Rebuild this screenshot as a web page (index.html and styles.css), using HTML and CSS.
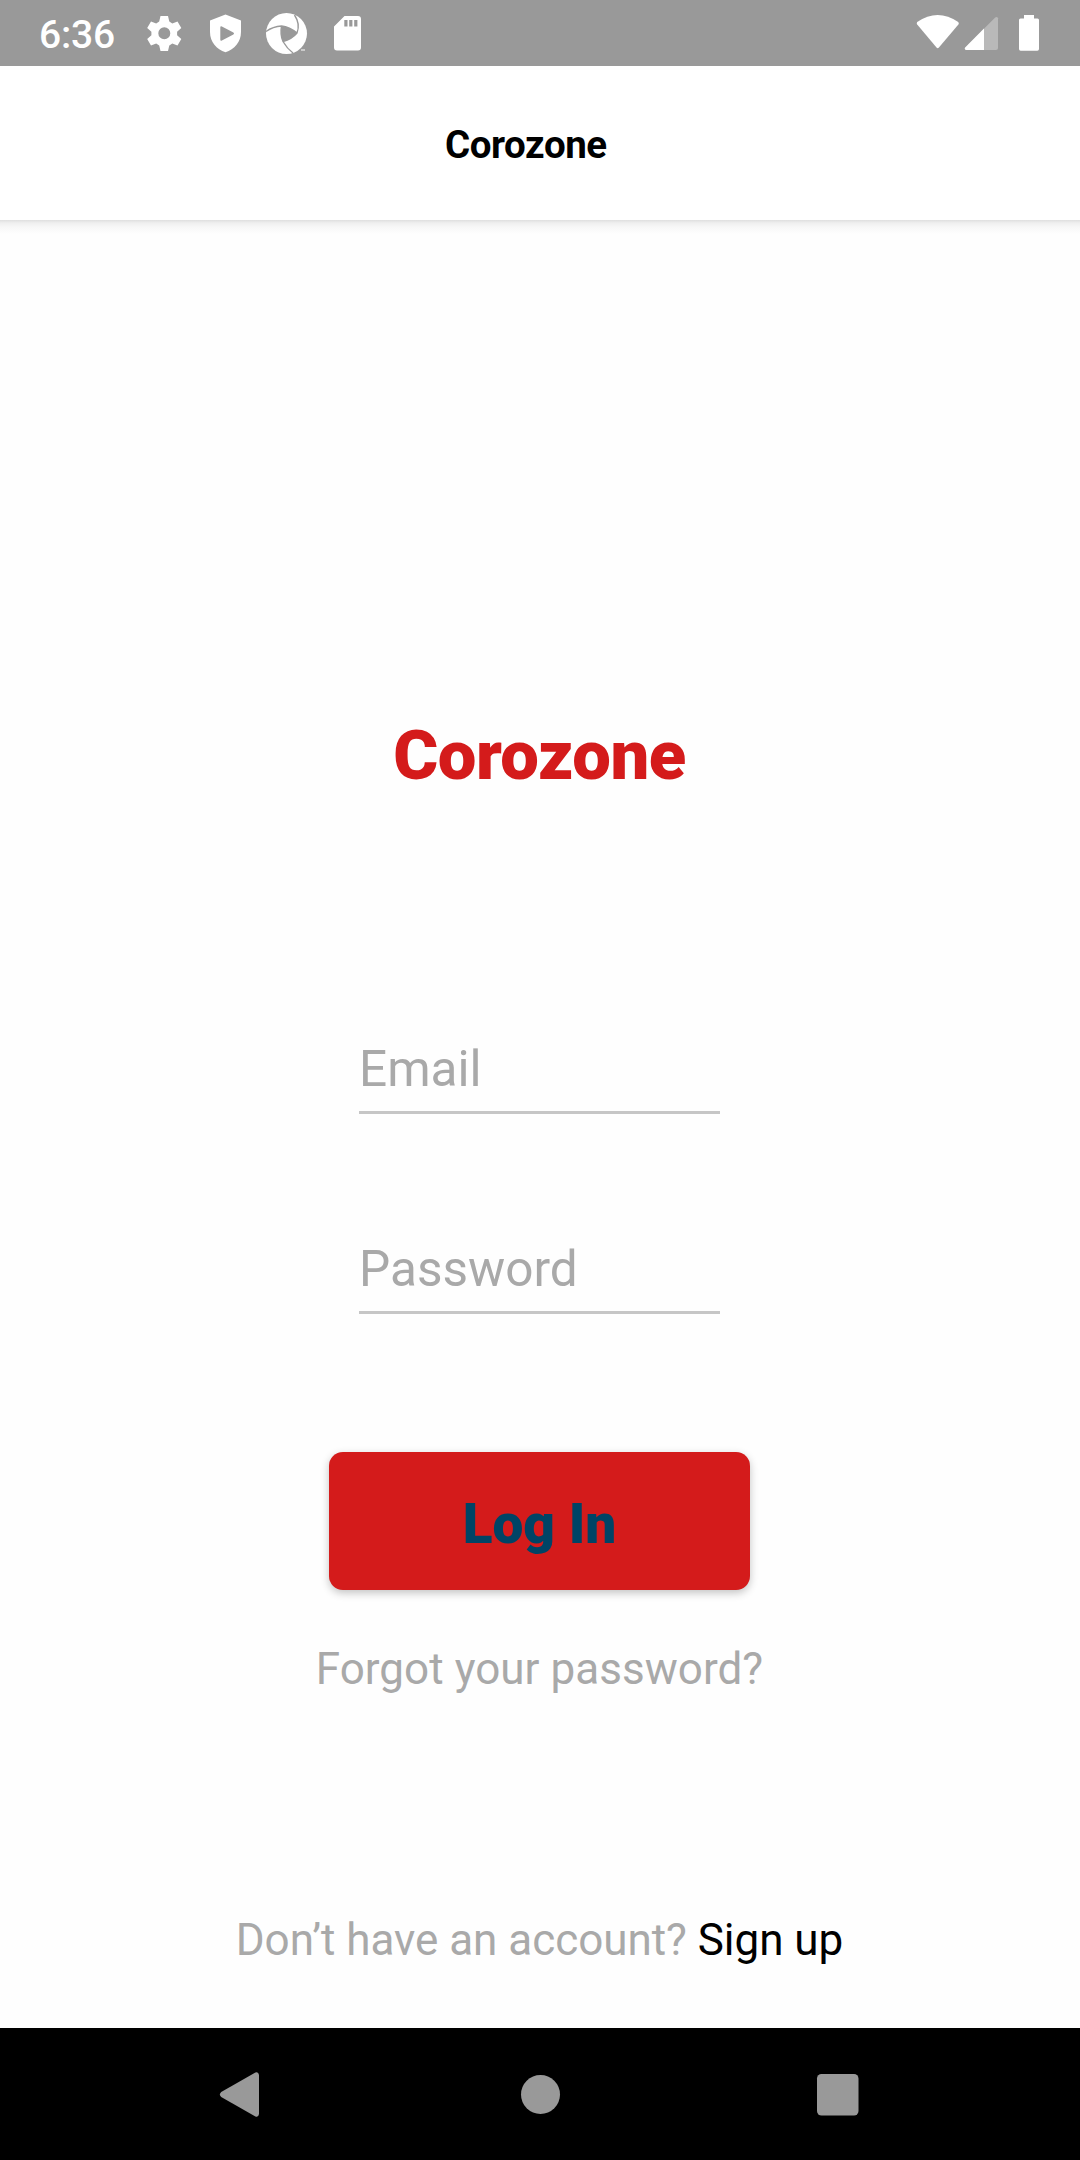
FILE: index.html
```html
<!DOCTYPE html>
<html lang="en">
<head>
<meta charset="utf-8">
<title>Corozone</title>
<link rel="stylesheet" href="styles.css">
</head>
<body>
<div class="screen">
  <div class="status">
    <span class="clock">6:36</span>
    <svg class="notifications" width="230" height="66" viewBox="140 0 230 66" fill="#fff">
      <path fill-rule="evenodd" d="M160.500 16h7.500l1.300 5.600 3 1.800 5.200-1.900 3.800 6.500-4.200 3.800v3.400l4.200 3.800-3.800 6.500-5.200-1.900-3 1.800-1.300 5.600h-7.500l-1.300-5.600-3-1.800-5.200 1.900-3.800-6.500 4.200-3.800v-3.400l-4.200-3.800 3.800-6.500 5.200 1.900 3-1.800zM164.300 27.300a6 6 0 1 0 0 12 6 6 0 1 0 0-12z"/>
      <path fill-rule="evenodd" d="M225.500 14.500l15.500 6v11.500c0 10-6.600 17.500-15.500 20.300-8.900-2.800-15.500-10.300-15.500-20.300v-11.500zM220.300 27.500q0-1.700 1.600-1l11.500 6q1.400 1 0 2.100l-11.500 6q-1.600.7-1.600-1z"/>
      <circle cx="286.500" cy="33.500" r="20.500"/>
      <path d="M281.500 26q8 1 15.500 7-5 6-14 8.500-3-7-1.500-15.500z" fill="#999"/>
      <path d="M266 31.500q7-5 15.500-5.500 8 1 15.500 7M294.500 15q6 9 2.500 18-5 6-14 8.500M281.500 26q-1.500 8.500 1.500 15.500 4 7 10 11.500" fill="none" stroke="#999" stroke-width="1.400"/>
      <path d="M301 50h4" stroke="#ddd" stroke-width="1.500"/>
      <path fill-rule="evenodd" d="M344.500 16h13.500q3 0 3 3v28.500q0 3-3 3h-21q-3 0-3-3v-21zM344.300 20v6.500h3.200v-6.500zM349.200 20v6.500h3.200v-6.500zM354.200 20v6.500h3.200v-6.500z"/>
    </svg>
    <svg class="signals" width="140" height="66" viewBox="910 0 140 66" fill="#fff">
      <path d="M917.200 22q20.500-14 41 0 1.200 1 .2 2.500l-19.500 23q-1.200 1.300-2.400 0l-19.300-23q-1-1.500 0-2.500z"/>
      <path d="M998 18.200v29.800q0 2-2 2h-30q-2-.6-.8-2.500l30-30q2-1.200 2.800.7z" fill="#b9b9b9"/>
      <path d="M984 28.600v21.400h-18q-2-.6-.8-2.500z"/>
      <path d="M1024 15h10v3.500h3.500q1.500 0 1.500 1.500v29q0 1.700-1.700 1.700h-16.600q-1.700 0-1.700-1.700v-29q0-1.500 1.500-1.500h3.500z"/>
    </svg>
  </div>
  <header class="appbar">Corozone</header>
  <main class="content">
    <h1 class="brand">Corozone</h1>
    <div class="field">Email</div>
    <div class="field field-password">Password</div>
    <button class="login">Log In</button>
    <a class="forgot">Forgot your password?</a>
    <p class="signup">Don’t have an account? <a class="signup-link">Sign up</a></p>
  </main>
  <nav class="navbar">
    <svg width="1080" height="132" viewBox="0 2028 1080 132" fill="#999">
      <path d="M259 2075v39q-.6 3.600-3.600 2.400l-34.200-19.300q-2.600-2.600 0-5.200l34.200-19.300q3-1.200 3.600 2.400z"/>
      <circle cx="540.500" cy="2094.500" r="19.500"/>
      <rect x="817" y="2074" width="41.500" height="41.500" rx="4.500"/>
    </svg>
  </nav>
</div>
</body>
</html>
```
FILE: styles.css
```css
body { margin: 0; font-family: Roboto, "Liberation Sans", sans-serif; }
.screen { display: flex; flex-direction: column; width: 1080px; height: 2160px; background: #fefefe; overflow: hidden; }
.status { display: flex; align-items: center; height: 66px; flex: none; background: #999; color: #fff; }
.clock { width: 101px; padding: 3px 0 0 39px; font-size: 39px; font-weight: 500; line-height: 46px; letter-spacing: -.2px; }
.signals { margin-left: 540px; }
.appbar { box-sizing: border-box; height: 154px; flex: none; padding: 52px 0 0 445px; background: #fff; color: #000; font-size: 38.5px; font-weight: 700; line-height: 54px; letter-spacing: -.45px; }
.content { box-sizing: border-box; display: flex; flex: 1; flex-direction: column; align-items: center; padding-right: 1px; background: linear-gradient(#dfdfdf, #efefef 3px, #f7f7f7 7px, #fefefe 14px); color: #a9a9a9; }
.brand { margin: 491px 0 0; color: #d41b1b; font-size: 68.750px; font-weight: 900; line-height: 90px; letter-spacing: -.5px; }
.field { box-sizing: border-box; width: 361px; height: 80px; margin-top: 233px; border-bottom: 3px solid #c6c6c6; font-size: 49.500px; line-height: 70px; }
.field-password { margin-top: 120px; }
.login { width: 421px; height: 138px; margin-top: 138px; padding: 6px 0 0; border: 0; border-radius: 14px; background: #d41b1b; box-shadow: 0 3px 8px rgba(0, 0, 0, .24); color: #004466; font-family: inherit; font-size: 55px; font-weight: 900; }
.forgot { margin-top: 51px; font-size: 44px; line-height: 56px; letter-spacing: .04px; }
.signup { margin: 215px 0 0; font-size: 44px; line-height: 56px; letter-spacing: -.03px; }
.signup-link { color: #000; }
.navbar { height: 132px; flex: none; background: #000; }
```
